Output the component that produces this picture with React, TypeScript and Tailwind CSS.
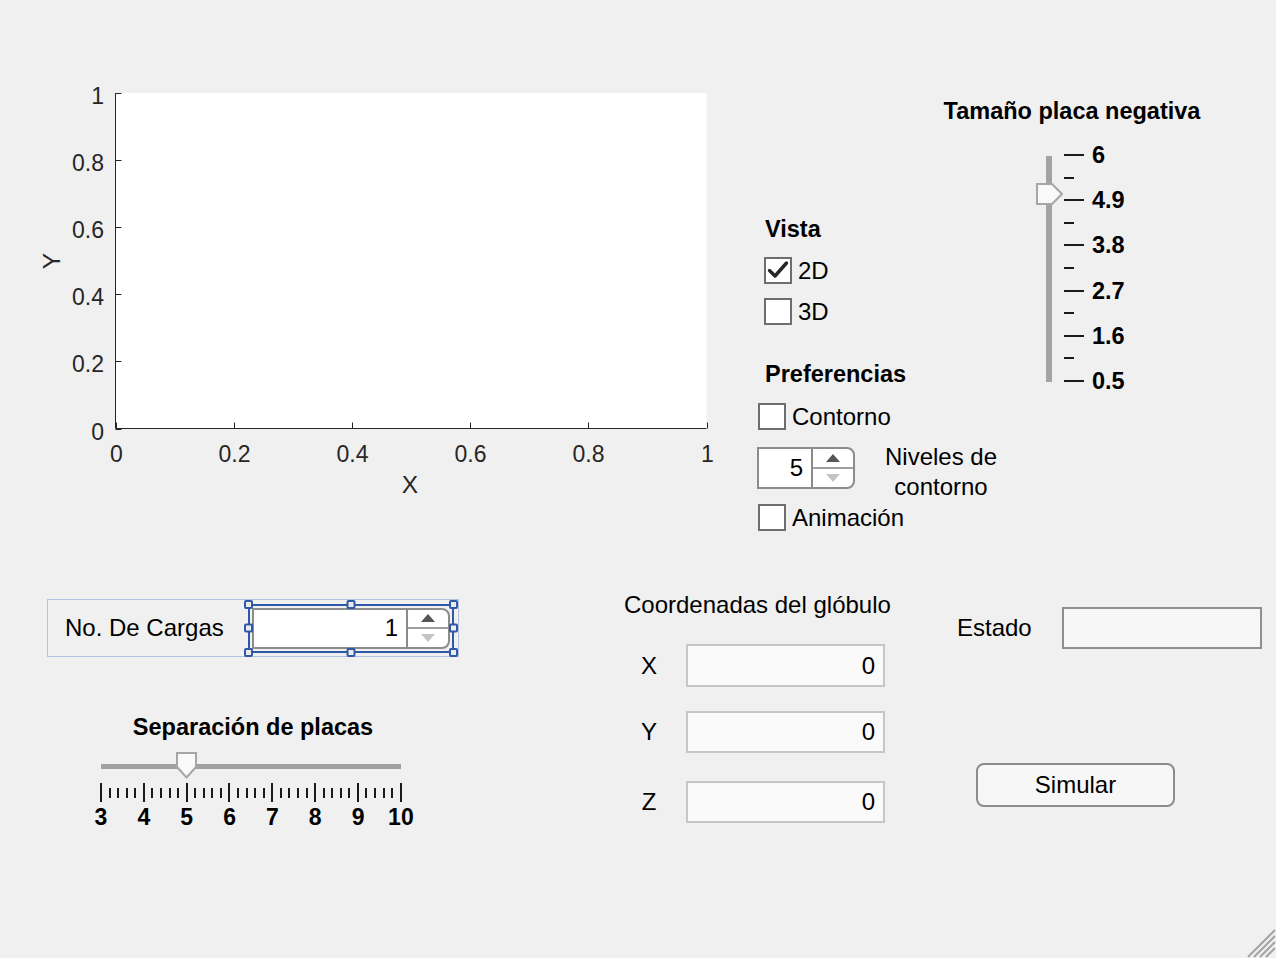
import React from "react";

const yTicks: number[] = [0, 0.2, 0.4, 0.6, 0.8, 1];
const sizeLabels: string[] = ["6", "4.9", "3.8", "2.7", "1.6", "0.5"];
const sepLabels: string[] = ["3", "4", "5", "6", "7", "8", "9", "10"];

function Axes() {
  const x0 = 85.5;
  const x1 = 676.5;
  const y0 = 348.5;
  const y1 = 13;
  const w = x1 - x0;
  const h = y0 - y1;
  return (
    <svg
      width={700}
      height={420}
      className="ml-[30px] mt-[80px] shrink-0"
      fontFamily="'Liberation Sans', Arial, sans-serif"
    >
      <rect x={x0} y={y1} width={w} height={h} fill="#ffffff" />
      <line x1={x0} y1={y1} x2={x0} y2={y0} stroke="#262626" strokeWidth={1} />
      <line x1={x0} y1={y0} x2={x1} y2={y0} stroke="#262626" strokeWidth={1} />
      {yTicks.map((v) => {
        const y = Math.round(y0 - v * h) + 0.5;
        return (
          <g key={"y" + v}>
            <line x1={x0} y1={y} x2={x0 + 6} y2={y} stroke="#262626" />
            <text
              x={74}
              y={y + 2}
              textAnchor="end"
              dominantBaseline="central"
              fontSize={23}
              fill="#262626"
            >
              {v}
            </text>
          </g>
        );
      })}
      {yTicks.map((v) => {
        const x = Math.round(x0 + v * w) + 0.5;
        return (
          <g key={"x" + v}>
            <line x1={x} y1={y0} x2={x} y2={y0 - 6} stroke="#262626" />
            <text
              x={x}
              y={374}
              textAnchor="middle"
              dominantBaseline="central"
              fontSize={23}
              fill="#262626"
            >
              {v}
            </text>
          </g>
        );
      })}
      <text x={380} y={404} textAnchor="middle" dominantBaseline="central" fontSize={24.5} fill="#262626">
        X
      </text>
      <text
        x={21}
        y={181}
        textAnchor="middle"
        dominantBaseline="central"
        fontSize={24.5}
        fill="#262626"
        transform="rotate(-90 21 181)"
      >
        Y
      </text>
    </svg>
  );
}

function Check({ checked, label }: { checked?: boolean; label: string }) {
  return (
    <div className="flex h-[27px] items-center">
      <div className="flex h-[27px] w-[28px] shrink-0 items-center justify-center border-2 border-[#6e6e6e] bg-white">
        {checked && (
          <svg width="24" height="23" viewBox="0 0 24 23">
            <path
              d="M3.5 11.5 L9 17 L20.5 4"
              fill="none"
              stroke="#262626"
              strokeWidth="3.4"
              strokeLinecap="round"
              strokeLinejoin="round"
            />
          </svg>
        )}
      </div>
      <span className="ml-[6px] whitespace-nowrap text-[24px] leading-[30px]">{label}</span>
    </div>
  );
}

function Spinner({ value, className }: { value: string; className: string }) {
  return (
    <div className={"flex rounded-r-[8px] border-2 border-[#8c8c8c] bg-white " + className}>
      <div className="flex flex-1 items-center justify-end pr-[8px] text-[24px] leading-none">{value}</div>
      <div className="flex w-[42px] flex-col border-l-2 border-[#8c8c8c]">
        <div className="flex flex-1 items-center justify-center border-b-2 border-[#a0a0a0]">
          <svg width="14" height="8" viewBox="0 0 14 8">
            <polygon points="0,8 14,8 7,0" fill="#555555" />
          </svg>
        </div>
        <div className="flex flex-1 items-center justify-center">
          <svg width="14" height="8" viewBox="0 0 14 8">
            <polygon points="0,0 14,0 7,8" fill="#c4c4c4" />
          </svg>
        </div>
      </div>
    </div>
  );
}

function Handle({ className }: { className: string }) {
  return (
    <span
      className={
        "absolute h-[9px] w-[9px] rounded-[2px] border-2 border-[#2f58a8] bg-[#ececec] " + className
      }
    />
  );
}

function CoordRow({ label, className }: { label: string; className: string }) {
  return (
    <div className={"flex items-center " + className}>
      <div className="w-[50px] text-center text-[24px] leading-[30px]">{label}</div>
      <div className="ml-[12px] flex h-full w-[199px] items-center justify-end border-2 border-[#c6c6c6] bg-[#fafafa] pr-[8px] text-[24px] leading-none">
        0
      </div>
    </div>
  );
}

export default function App() {
  return (
    <div className="relative h-[958px] w-[1276px] overflow-hidden bg-[#f0f0f0] font-['Liberation_Sans',Arial,sans-serif] text-black">
      {/* Top: axes, options, vertical slider */}
      <div className="flex h-[560px] items-start">
        <Axes />

        <div className="ml-[27px] mt-[214px] flex w-[184px] shrink-0 flex-col">
          <div className="ml-[8px] h-[30px] text-[23.5px] font-bold leading-[30px]">Vista</div>
          <div className="ml-[7px] mt-[13px]">
            <Check checked label="2D" />
          </div>
          <div className="ml-[7px] mt-[14px]">
            <Check label="3D" />
          </div>
          <div className="ml-[8px] mt-[34px] h-[30px] text-[23.5px] font-bold leading-[30px]">Preferencias</div>
          <div className="ml-[1px] mt-[14px]">
            <Check label="Contorno" />
          </div>
          <div className="mt-[17px] flex h-[42px] items-start">
            <Spinner value="5" className="h-[42px] w-[98px] shrink-0" />
            <div className="ml-[16px] -mt-[5px] w-[140px] shrink-0 text-center text-[24px] leading-[30px]">
              Niveles de contorno
            </div>
          </div>
          <div className="ml-[1px] mt-[15px]">
            <Check label="Animación" />
          </div>
        </div>

        <div className="mt-[96px] flex w-[262px] shrink-0 flex-col">
          <div className="h-[30px] whitespace-nowrap text-center text-[23.5px] font-bold leading-[30px]">
            Tamaño placa negativa
          </div>
          <div className="ml-[95px] mt-[28px] flex">
            <div className="relative h-[228px] w-[27px]">
              <div className="ml-[10px] mt-[2px] h-[226px] w-[6px] bg-[#a3a3a3]" />
              <svg width="27" height="22" viewBox="0 0 27 22" className="absolute left-0 top-[29px]">
                <polygon points="1,1 16,1 26,11 16,21 1,21" fill="#f9f9f9" stroke="#a6a6a6" strokeWidth="2" />
              </svg>
            </div>
            <div className="ml-[1px] flex h-[228px] flex-col justify-between">
              {Array.from({ length: 11 }).map((_, i) => (
                <div key={i} className="flex h-[2px] items-center">
                  <div className={i % 2 === 0 ? "h-[2px] w-[20px] bg-[#1a1a1a]" : "h-[2px] w-[10px] bg-[#1a1a1a]"} />
                  {i % 2 === 0 && (
                    <span className="ml-[8px] whitespace-nowrap text-[23.5px] font-bold leading-[30px]">
                      {sizeLabels[i / 2]}
                    </span>
                  )}
                </div>
              ))}
            </div>
          </div>
        </div>
      </div>

      {/* Bottom: charges, coordinates, status */}
      <div className="flex items-start">
        <div className="ml-[47px] mt-[39px] flex w-[412px] shrink-0 flex-col">
          <div className="flex h-[58px] items-center border border-[#b5c2df]">
            <div className="ml-[17px] w-[183px] shrink-0 whitespace-nowrap text-[24px] leading-[30px]">
              No. De Cargas
            </div>
            <div className="relative h-[49px] w-[206px] shrink-0 border-2 border-[#2f58a8] p-[2px]">
              <Spinner value="1" className="h-full w-full" />
              <Handle className="-left-[6px] -top-[6px]" />
              <Handle className="left-1/2 -top-[6px] -translate-x-1/2" />
              <Handle className="-right-[6px] -top-[6px]" />
              <Handle className="-left-[6px] top-1/2 -translate-y-1/2" />
              <Handle className="-right-[6px] top-1/2 -translate-y-1/2" />
              <Handle className="-bottom-[6px] -left-[6px]" />
              <Handle className="-bottom-[6px] left-1/2 -translate-x-1/2" />
              <Handle className="-bottom-[6px] -right-[6px]" />
            </div>
          </div>

          <div className="mt-[55px] h-[30px] whitespace-nowrap text-center text-[23.5px] font-bold leading-[30px]">
            Separación de placas
          </div>
          <div className="relative ml-[54px] mt-[22px] w-[300px]">
            <div className="h-[5px] w-[300px] bg-[#a0a0a0]" />
            <svg width="21" height="27" viewBox="0 0 21 27" className="absolute left-[75px] -top-[12px]">
              <polygon points="1,1 20,1 20,15 10.5,25.5 1,15" fill="#f9f9f9" stroke="#a6a6a6" strokeWidth="2" />
            </svg>
            <div className="-ml-[1px] mt-[14px] flex h-[19px] w-[302px] items-center justify-between">
              {Array.from({ length: 36 }).map((_, i) => (
                <div key={i} className={i % 5 === 0 ? "h-[19px] w-[2px] bg-[#1a1a1a]" : "h-[10px] w-[2px] bg-[#1a1a1a]"} />
              ))}
            </div>
            <div className="-ml-[1px] flex h-[30px] w-[302px] justify-between">
              {sepLabels.map((l) => (
                <div key={l} className="flex w-[2px] justify-center">
                  <span className="whitespace-nowrap text-[23px] font-bold leading-[30px]">{l}</span>
                </div>
              ))}
            </div>
          </div>
        </div>

        <div className="ml-[165px] mt-[30px] flex w-[270px] shrink-0 flex-col">
          <div className="h-[30px] whitespace-nowrap text-[24px] leading-[30px]">Coordenadas del glóbulo</div>
          <CoordRow label="X" className="mt-[24px] h-[43px]" />
          <CoordRow label="Y" className="mt-[24px] h-[42px]" />
          <CoordRow label="Z" className="mt-[28px] h-[42px]" />
        </div>

        <div className="ml-[63px] mt-[47px] flex shrink-0 flex-col">
          <div className="flex h-[42px] items-center">
            <div className="w-[105px] text-[24px] leading-[30px]">Estado</div>
            <div className="h-[42px] w-[200px] border-2 border-[#8f8f8f] bg-[#f7f7f7]" />
          </div>
          <button className="ml-[19px] mt-[114px] h-[44px] w-[199px] rounded-[8px] border-2 border-[#8c8c8c] bg-[#f7f7f7] text-[24px] leading-none">
            Simular
          </button>
        </div>
      </div>

      {/* window resize grip */}
      <svg width="32" height="32" viewBox="0 0 32 32" className="absolute bottom-0 right-0">
        {[0, 6, 12, 18].map((o) => (
          <line key={o} x1={4 + o} y1={31} x2={31} y2={4 + o} stroke="#a4a4a4" strokeWidth="2" />
        ))}
      </svg>
    </div>
  );
}
